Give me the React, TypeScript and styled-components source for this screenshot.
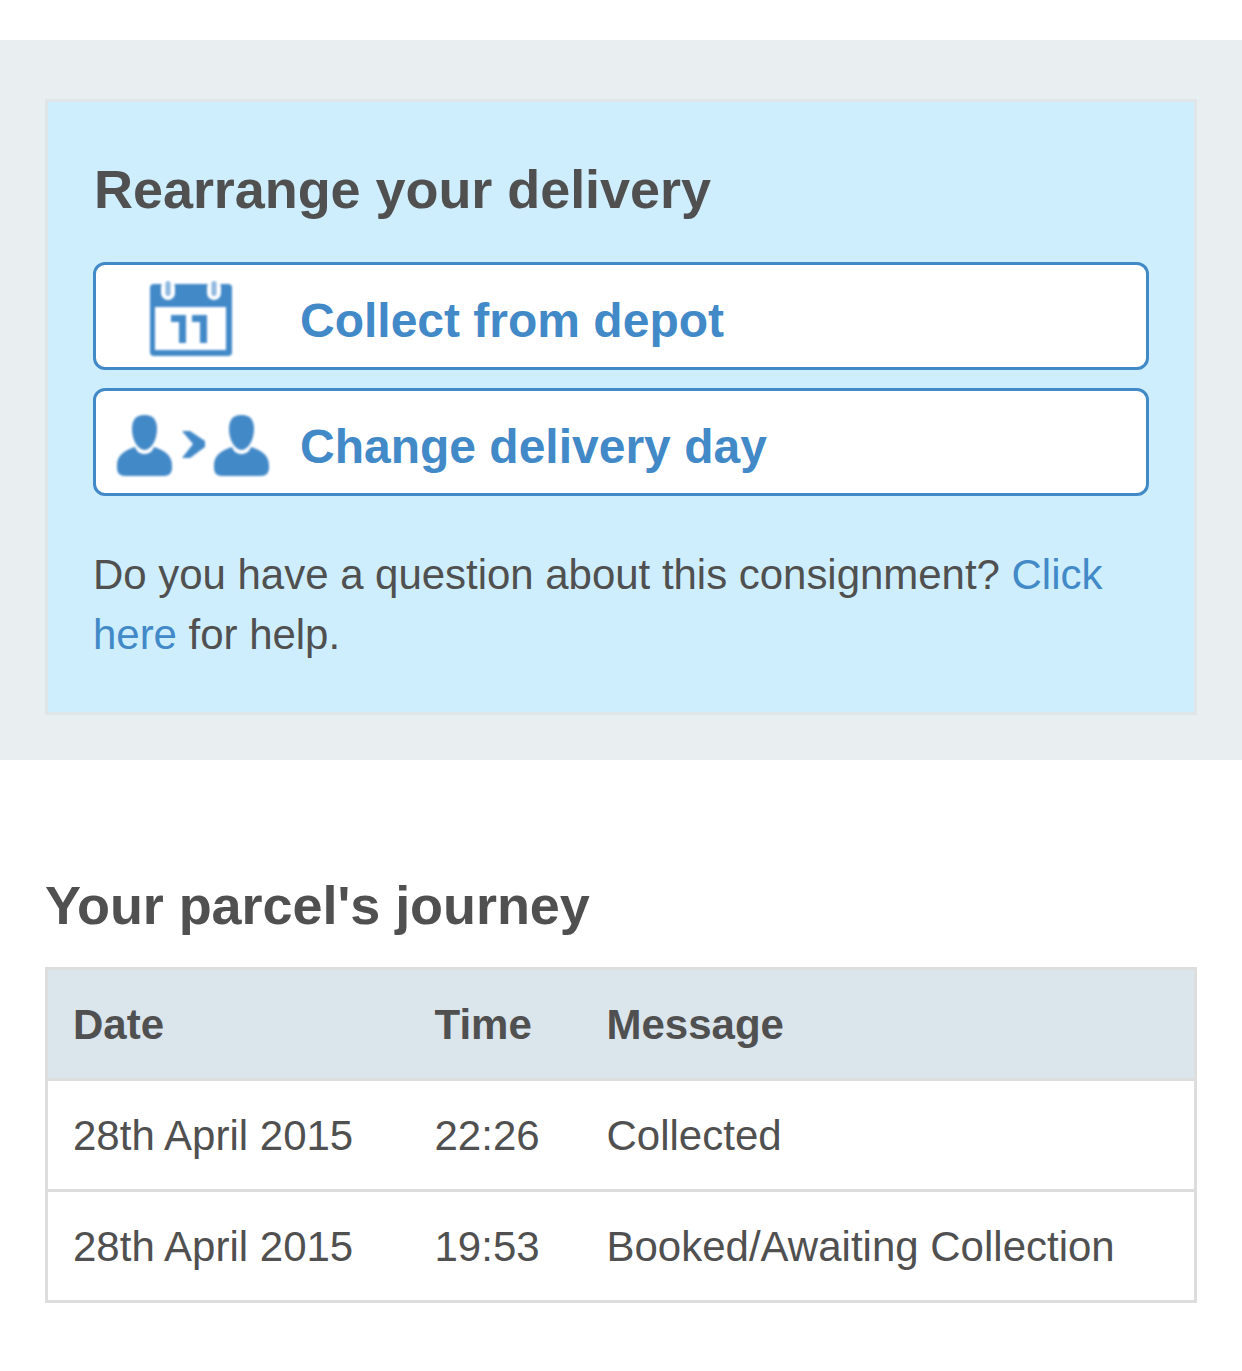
import React from "react";
import styled, { createGlobalStyle } from "styled-components";

const GlobalStyle = createGlobalStyle`
  html, body {
    margin: 0;
    padding: 0;
    background: #fff;
    font-family: "Liberation Sans", Arial, sans-serif;
    color: #505050;
  }
`;

const Page = styled.div`
  width: 1242px;
  height: 1371px;
  padding-top: 40px;
  box-sizing: border-box;
  overflow: hidden;
`;

const Band = styled.section`
  background: #e9eef1;
  padding: 59px 45px 45px;
`;

const Panel = styled.div`
  background: #cfeefd;
  border: 3px solid #dfe6ea;
  padding: 56px 45px 47px;
`;

const Heading = styled.h2<{ $indent?: number }>`
  font-size: 54px;
  line-height: 62px;
  font-weight: 700;
  letter-spacing: -0.06px;
  margin: 0 0 0 ${(p) => p.$indent ?? 0}px;
  color: #505050;
`;

const ActionList = styled.div`
  display: flex;
  flex-direction: column;
  gap: 18px;
  margin-top: 42px;
`;

const ActionButton = styled.a`
  display: flex;
  align-items: center;
  height: 108px;
  box-sizing: border-box;
  background: #fff;
  border: 3px solid #4289c8;
  border-radius: 12px;
  color: #4289c8;
  font-size: 48px;
  font-weight: 700;
`;

const IconSlot = styled.span<{ $inset: number; $drop: number }>`
  width: 204px;
  flex: none;
  box-sizing: border-box;
  display: flex;
  padding-left: ${(p) => p.$inset}px;
  padding-top: ${(p) => p.$drop}px;
`;

const SoftIcon = styled.svg`
  filter: blur(0.8px);
`;

const Label = styled.span`
  position: relative;
  top: 4px;
`;

const HelpText = styled.p`
  font-size: 42px;
  line-height: 60px;
  letter-spacing: -0.03px;
  margin: 49px 0 0;
`;

const HelpLink = styled.a`
  color: #4289c8;
`;

const Journey = styled.section`
  padding: 114px 45px 0;
`;

const JourneyTable = styled.table`
  width: 100%;
  margin-top: 31px;
  border-collapse: collapse;
  border: 3px solid #dddddd;
  font-size: 42px;
  table-layout: fixed;
`;

const HeadRow = styled.tr`
  background: #dbe5ec;
`;

const HeadCell = styled.th<{ $width?: number }>`
  height: 111px;
  box-sizing: border-box;
  padding: 2px 0 0 25px;
  text-align: left;
  font-weight: 700;
  border-bottom: 3px solid #dddddd;
  width: ${(p) => (p.$width ? `${p.$width}px` : "auto")};
`;

const BodyRow = styled.tr`
  border-bottom: 3px solid #dddddd;
`;

const Cell = styled.td`
  height: 111px;
  box-sizing: border-box;
  padding: 1px 0 0 25px;
`;

const CalendarIcon = () => (
  <SoftIcon width="82" height="76" viewBox="0 0 82 76">
    <path
      fill="#4289c8"
      d="M4 4h74a4 4 0 0 1 4 4v64a4 4 0 0 1-4 4H4a4 4 0 0 1-4-4V8a4 4 0 0 1 4-4z"
    />
    <rect x="5" y="27" width="71" height="43" fill="#fff" />
    <rect x="11" y="0" width="14" height="20" rx="7" fill="#fff" />
    <rect x="57" y="0" width="14" height="20" rx="7" fill="#fff" />
    <rect x="15.500" y="1" width="5" height="15" rx="2.500" fill="#4289c8" opacity="0.6" />
    <rect x="61.500" y="1" width="5" height="15" rx="2.500" fill="#4289c8" opacity="0.6" />
    <path
      fill="#4289c8"
      d="M21 35h15v28h-7V42h-8zM42 35h15v28h-7V42h-8z"
    />
  </SoftIcon>
);

const Person = ({ x }: { x: number }) => (
  <g transform={`translate(${x} 0)`}>
    <path
      fill="#4289c8"
      d="M0 50C0 40 8 35 18 32 20 37 23 39 27.500 39 32 39 35 37 37 32 47 35 55 40 55 50V53C55 58 52 61 47 61H8C3 61 0 58 0 53z"
    />
    <path
      fill="#4289c8"
      d="M27.500 0C37 0 40 6 40 14 40 25 34 35 27.500 35 21 35 15 25 15 14 15 6 18 0 27.500 0z"
    />
  </g>
);

const TransferIcon = () => (
  <SoftIcon width="154" height="61" viewBox="0 0 154 61">
    <Person x={0} />
    <path fill="#4289c8" d="M65 16h8l15 10v6L73 43h-8l11-14z" />
    <Person x={97} />
  </SoftIcon>
);

const App = () => {
  return (
    <Page>
      <GlobalStyle />
      <Band>
        <Panel>
          <Heading $indent={1}>Rearrange your delivery</Heading>
          <ActionList>
            <ActionButton>
              <IconSlot $inset={54} $drop={4}>
                <CalendarIcon />
              </IconSlot>
              <Label>Collect from depot</Label>
            </ActionButton>
            <ActionButton>
              <IconSlot $inset={21} $drop={7}>
                <TransferIcon />
              </IconSlot>
              <Label>Change delivery day</Label>
            </ActionButton>
          </ActionList>
          <HelpText>
            Do you have a question about this consignment?{" "}
            <HelpLink>Click here</HelpLink> for help.
          </HelpText>
        </Panel>
      </Band>
      <Journey>
        <Heading>Your parcel's journey</Heading>
        <JourneyTable>
          <thead>
            <HeadRow>
              <HeadCell $width={363}>Date</HeadCell>
              <HeadCell $width={172}>Time</HeadCell>
              <HeadCell>Message</HeadCell>
            </HeadRow>
          </thead>
          <tbody>
            <BodyRow>
              <Cell>28th April 2015</Cell>
              <Cell>22:26</Cell>
              <Cell>Collected</Cell>
            </BodyRow>
            <BodyRow>
              <Cell>28th April 2015</Cell>
              <Cell>19:53</Cell>
              <Cell>Booked/Awaiting Collection</Cell>
            </BodyRow>
          </tbody>
        </JourneyTable>
      </Journey>
    </Page>
  );
};

export default App;
